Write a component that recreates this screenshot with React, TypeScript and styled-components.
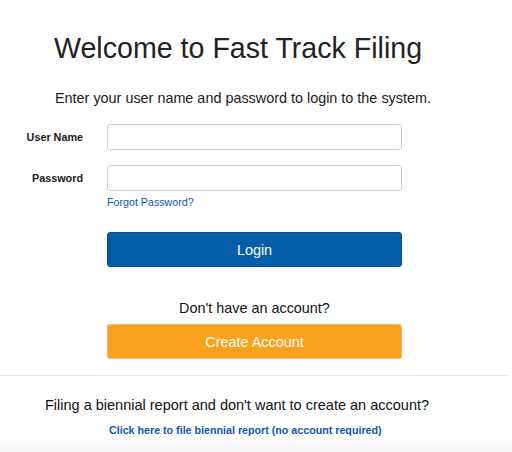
import styled, { createGlobalStyle } from "styled-components";

const GlobalStyle = createGlobalStyle`
  html, body {
    margin: 0;
    padding: 0;
    background: #ffffff;
  }
  body {
    font-family: "Liberation Sans", Arial, Helvetica, sans-serif;
    color: #1d1d1d;
  }
`;

const Page = styled.div`
  width: 512px;
  height: 452px;
  overflow: hidden;
  display: flex;
  flex-direction: column;
`;

const Top = styled.section`
  padding-top: 32px;
  display: flex;
  flex-direction: column;
`;

const Title = styled.h1`
  margin: 0 0 0 54px;
  font-size: 28.6px;
  line-height: 32px;
  font-weight: 400;
  color: #222222;
`;

const Intro = styled.p`
  margin: 25px 0 0 55px;
  font-size: 14.4px;
  line-height: 18px;
  color: #1a1a1a;
`;

const Form = styled.div`
  margin-top: 17px;
  display: grid;
  grid-template-columns: 83px 295px;
  column-gap: 24px;
  row-gap: 15px;
  align-items: start;
`;

const Label = styled.label`
  height: 26px;
  display: flex;
  align-items: center;
  justify-content: flex-end;
  font-size: 10.8px;
  font-weight: 700;
  color: #1a1a1a;
`;

const Field = styled.div`
  display: flex;
  flex-direction: column;
`;

const Input = styled.input`
  box-sizing: border-box;
  width: 100%;
  height: 26px;
  margin: 0;
  padding: 0 8px;
  border: 1px solid #cfcfcf;
  border-radius: 3px;
  background: #ffffff;
  font-family: inherit;
  font-size: 12px;
`;

const Link = styled.a<{ $bold?: boolean; $size: number }>`
  color: #0d56b3;
  text-decoration: none;
  font-size: ${(p) => p.$size}px;
  font-weight: ${(p) => (p.$bold ? 700 : 400)};
`;

const Forgot = styled.div`
  margin-top: 3px;
  line-height: 13px;
`;

const Actions = styled.div`
  margin-left: 107px;
  width: 295px;
  display: flex;
  flex-direction: column;
  padding-top: 23px;
`;

const Button = styled.button<{ $bg: string; $border: string }>`
  box-sizing: border-box;
  width: 100%;
  height: 35px;
  margin: 0;
  border: 1px solid ${(p) => p.$border};
  border-radius: 3px;
  background: ${(p) => p.$bg};
  color: #ffffff;
  font-family: inherit;
  font-size: 14.4px;
  cursor: pointer;
`;

const Prompt = styled.p`
  margin: 32px 0 7px;
  text-align: center;
  font-size: 14.4px;
  line-height: 18px;
  color: #111111;
`;

const Divider = styled.hr`
  margin: 16px 4px 0 0;
  border: none;
  border-top: 1px solid #e8e8e8;
`;

const Bottom = styled.section`
  padding-top: 20px;
  display: flex;
  flex-direction: column;
`;

const BottomText = styled.p`
  margin: 0 0 0 45px;
  font-size: 14.5px;
  line-height: 18px;
  color: #111111;
`;

const BottomLink = styled.div`
  margin: 8px 0 0 109px;
  line-height: 14px;
`;

const Footer = styled.div`
  margin-top: 2px;
  flex: 1;
  background: linear-gradient(#fbfbfb, #f6f6f6);
`;

export default function App() {
  return (
    <>
      <GlobalStyle />
      <Page>
        <Top>
          <Title>Welcome to Fast Track Filing</Title>
          <Intro>Enter your user name and password to login to the system.</Intro>
          <Form>
            <Label htmlFor="username">User Name</Label>
            <Input id="username" type="text" />
            <Label htmlFor="password">Password</Label>
            <Field>
              <Input id="password" type="password" />
              <Forgot>
                <Link href="#" $size={10.7}>
                  Forgot Password?
                </Link>
              </Forgot>
            </Field>
          </Form>
          <Actions>
            <Button $bg="#045ea8" $border="#0a4c93">
              Login
            </Button>
            <Prompt>Don't have an account?</Prompt>
            <Button $bg="#f9a11c" $border="#f7b07a">
              Create Account
            </Button>
          </Actions>
        </Top>
        <Divider />
        <Bottom>
          <BottomText>Filing a biennial report and don't want to create an account?</BottomText>
          <BottomLink>
            <Link href="#" $size={10.7} $bold>
              Click here to file biennial report (no account required)
            </Link>
          </BottomLink>
        </Bottom>
        <Footer />
      </Page>
    </>
  );
}
